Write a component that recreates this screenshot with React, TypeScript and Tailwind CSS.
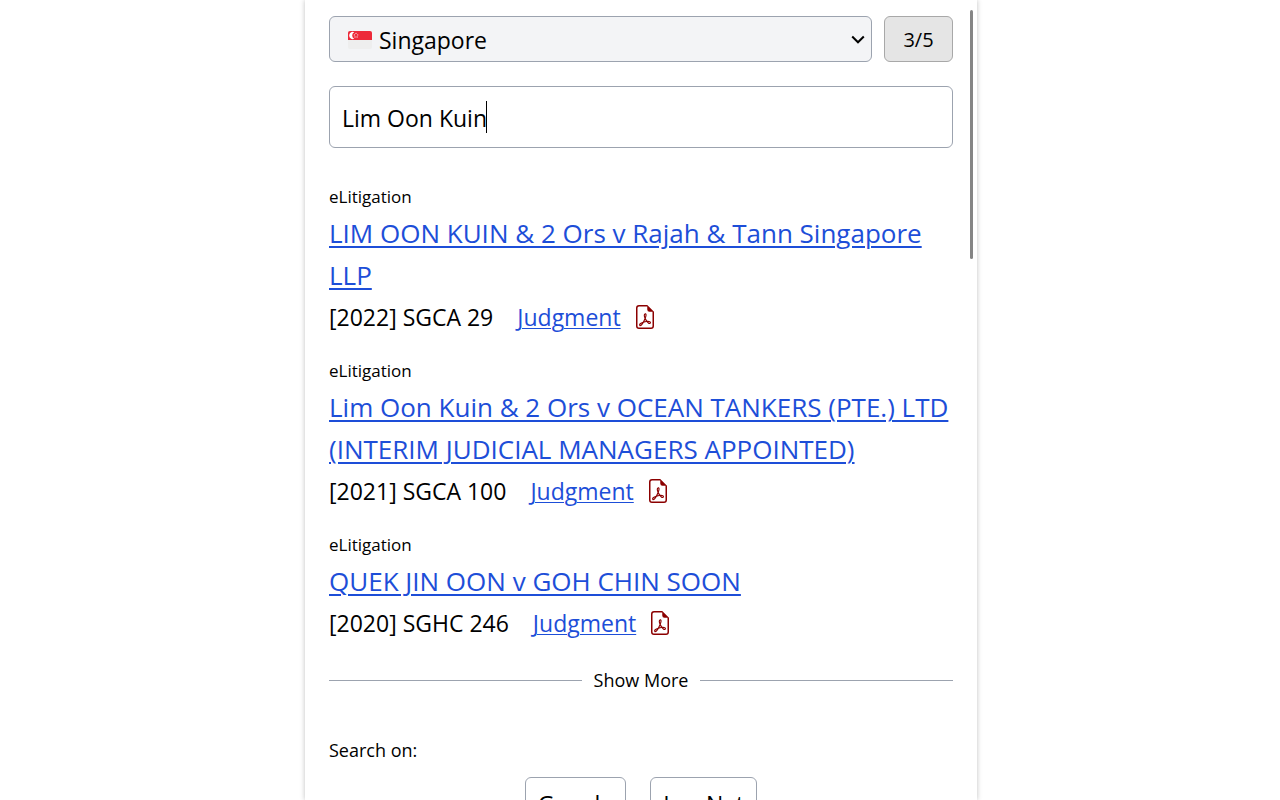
import { useState } from 'react';
import { BsFileEarmarkPdf } from 'react-icons/bs';

const results = [
    {
        id: 'sgca-29',
        source: 'eLitigation',
        name: 'LIM OON KUIN & 2 Ors v Rajah & Tann Singapore LLP',
        citation: '[2022] SGCA 29',
    },
    {
        id: 'sgca-100',
        source: 'eLitigation',
        name: 'Lim Oon Kuin & 2 Ors v OCEAN TANKERS (PTE.) LTD (INTERIM JUDICIAL MANAGERS APPOINTED)',
        citation: '[2021] SGCA 100',
    },
    {
        id: 'sghc-246',
        source: 'eLitigation',
        name: 'QUEK JIN OON v GOH CHIN SOON',
        citation: '[2020] SGHC 246',
    },
];

const engines = ['Google', 'LawNet'];

function Flag() {
    return (
        <svg viewBox="0 0 24 18" className="pointer-events-none absolute left-[19px] top-[15px] h-[18px] w-6" aria-hidden="true">
            <rect width="24" height="18" rx="2" fill="#eeeeee" />
            <path d="M0 9V2a2 2 0 0 1 2-2h20a2 2 0 0 1 2 2v7z" fill="#ed2939" />
            <path d="M6.2 1.2a3.6 3.6 0 1 0 0 6.6 3.7 3.7 0 0 1 0-6.6z" fill="#fff" />
            <g fill="#fff" opacity="0.75">
                <circle cx="8" cy="2.4" r=".7" />
                <circle cx="6.4" cy="3.9" r=".7" />
                <circle cx="9.7" cy="3.9" r=".7" />
                <circle cx="7" cy="6" r=".7" />
                <circle cx="9.1" cy="6" r=".7" />
            </g>
        </svg>
    );
}

export default function App() {
    const [query, setQuery] = useState('Lim Oon Kuin');

    return (
        <div className="h-screen overflow-hidden bg-white pl-0.5 font-['Open_Sans','Noto_Sans',sans-serif] text-black">
            <main className="relative mx-auto h-full max-w-[672px] overflow-hidden px-6 pt-4 shadow-[0_0_5px_rgba(0,0,0,0.25)]">
                {/* Scroll thumb */}
                <div className="absolute right-1 top-[10px] h-[249px] w-[3px] rounded-full bg-[#858585]" />

                {/* Jurisdiction */}
                <div className="flex gap-3">
                    <div className="relative flex-1">
                        <Flag />
                        <select
                            aria-label="Jurisdiction"
                            className="h-[46px] w-full appearance-none rounded-md border border-[#9ca3af] bg-[#f3f4f6] pl-[49px] pt-0.5 text-[23px] leading-8"
                        >
                            <option>Singapore</option>
                        </select>
                        <svg viewBox="0 0 14 10" className="pointer-events-none absolute right-[7px] top-[19px] h-[10px] w-[14px]" fill="none" stroke="#000" strokeWidth="2" aria-hidden="true">
                            <path d="M1.2 1.5 7 7.3l5.8-5.8" />
                        </svg>
                    </div>
                    <button className="h-[46px] w-[69px] rounded-md border border-[#a8a8a8] bg-[#e5e5e5] pt-0.5 text-[20px]">3/5</button>
                </div>

                {/* Query */}
                <div className="relative mt-6">
                    <input
                        type="text"
                        aria-label="Search cases"
                        value={query}
                        onChange={(e) => setQuery(e.target.value)}
                        className="block h-[62px] w-full rounded-md border border-[#9ca3af] px-3 pt-0.5 text-[23px] outline-none"
                    />
                    <span className="absolute left-[157px] top-[15px] h-8 w-px bg-black" />
                </div>

                {/* Results */}
                <div className="mt-9 space-y-5">
                    {results.map((result) => (
                        <div key={result.id}>
                            <div className="mb-0.5 text-[17px] leading-[26px]">{result.source}</div>
                            <a href="#" className="block text-[26px] leading-[42px] text-[#1d4ed8] underline decoration-2 underline-offset-3">
                                {result.name}
                            </a>
                            <div className="flex items-center text-[23px] leading-[42px]">
                                <span className="mr-6">{result.citation}</span>
                                <a href="#" className="mr-3 text-[#1d4ed8] underline decoration-1 underline-offset-2">Judgment</a>
                                <BsFileEarmarkPdf className="h-6 w-6 text-[#8b0000]" />
                            </div>
                        </div>
                    ))}
                </div>

                <div className="mt-6 flex items-center gap-3">
                    <div className="h-px flex-1 bg-[#9ca3af]" />
                    <button className="text-[18px] leading-6">Show More</button>
                    <div className="h-px flex-1 bg-[#9ca3af]" />
                </div>

                {/* Other search engines */}
                <div className="mt-[46px] text-[18px] leading-6">Search on:</div>
                <div className="mt-[15px] flex justify-center gap-6">
                    {engines.map((engine) => (
                        <a key={engine} href="#" className="rounded-md border border-[#9ca3af] px-3 py-2 text-[23px] leading-9">
                            {engine}
                        </a>
                    ))}
                </div>
            </main>
        </div>
    );
}
